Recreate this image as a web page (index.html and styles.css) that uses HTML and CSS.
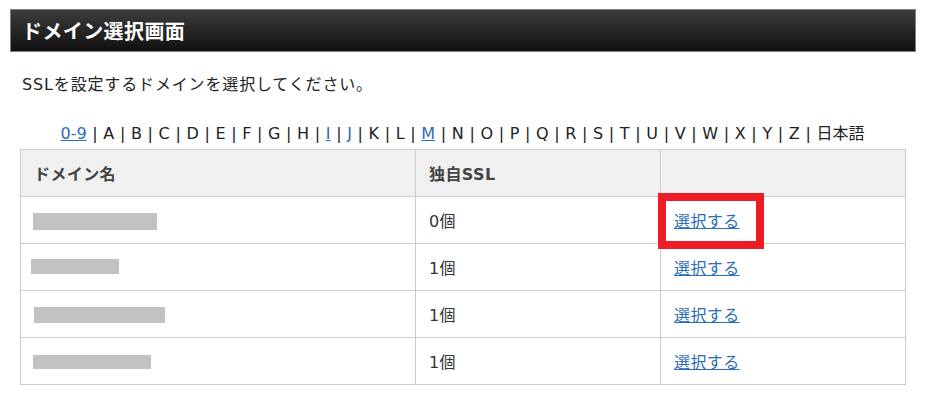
FILE: index.html
```html
<!DOCTYPE html>
<html lang="ja">
<head>
<meta charset="utf-8">
<title>ドメイン選択画面</title>
<link rel="stylesheet" href="styles.css">
</head>
<body>
<div class="page">
  <h1 class="title">ドメイン選択画面</h1>
  <p class="lead">SSLを設定するドメインを選択してください。</p>
  <div class="index-nav">
    <a href="#">0-9</a> | A | B | C | D | E | F | G | H | <a href="#">I</a> | <a href="#">J</a> | K | L | <a href="#">M</a> | N | O | P | Q | R | S | T | U | V | W | X | Y | Z | 日本語
  </div>
  <table class="domains">
    <colgroup>
      <col class="c1"><col class="c2"><col class="c3">
    </colgroup>
    <thead>
      <tr><th>ドメイン名</th><th>独自SSL</th><th></th></tr>
    </thead>
    <tbody>
      <tr>
        <td><span class="mask" style="width:124px;height:17px;margin-left:-1px"></span></td>
        <td>0個</td>
        <td><span class="highlight"><a href="#">選択する</a></span></td>
      </tr>
      <tr>
        <td><span class="mask" style="width:88px;height:15px;margin-left:-3px;top:-2px"></span></td>
        <td>1個</td>
        <td><a href="#">選択する</a></td>
      </tr>
      <tr>
        <td><span class="mask" style="width:131px;height:16px"></span></td>
        <td>1個</td>
        <td><a href="#">選択する</a></td>
      </tr>
      <tr>
        <td><span class="mask" style="width:118px;height:14px;margin-left:-1px"></span></td>
        <td>1個</td>
        <td><a href="#">選択する</a></td>
      </tr>
    </tbody>
  </table>
</div>
</body>
</html>
```
FILE: styles.css
```css
html, body {
  margin: 0;
  padding: 0;
  background: #fff;
}
body {
  font-family: "DejaVu Sans", "Noto Sans CJK JP", sans-serif;
  color: #222;
  font-size: 16px;
}
.page {
  padding: 9px 16px 0 10px;
}
.title {
  margin: 0;
  height: 41px;
  border: 1px solid #808080;
  background: linear-gradient(#3c3c3c, #101010);
  color: #fff;
  font-family: "Noto Sans CJK JP", sans-serif;
  font-size: 20px;
  font-weight: bold;
  line-height: 41px;
  padding-left: 11px;
  letter-spacing: 0.4px;
}
.lead {
  margin: 22px 0 0 12px;
  font-size: 16px;
  line-height: 22px;
  color: #222;
  letter-spacing: 0.85px;
}
.index-nav {
  margin: 27px 0 0 10px;
  width: 885px;
  text-align: center;
  font-size: 16px;
  line-height: 22px;
  color: #222;
  word-spacing: 0.55px;
}
a {
  color: #2a6cb8;
  text-decoration: underline;
}
.domains {
  margin: 4px 0 0 10px;
  width: 886px;
  border-collapse: collapse;
  table-layout: fixed;
  font-size: 16px;
  letter-spacing: 0.4px;
}
.c1 { width: 395px; }
.c2 { width: 245px; }
.c3 { width: 245px; }
.domains th, .domains td {
  border: 1px solid #cccccc;
  height: 47px;
  padding: 0 13px;
  text-align: left;
  vertical-align: middle;
  box-sizing: border-box;
}
.domains th {
  background: #f0f0f0;
  color: #444;
  font-weight: bold;
}
.domains td {
  color: #333;
}
.mask {
  display: inline-block;
  position: relative;
  background: #c2c2c2;
  vertical-align: middle;
}
.highlight {
  position: relative;
  display: inline-block;
}
.highlight::before {
  content: "";
  position: absolute;
  left: -16px;
  top: -15px;
  width: 106px;
  height: 56px;
  box-sizing: border-box;
  border: 8px solid #ee1c25;
}
```
